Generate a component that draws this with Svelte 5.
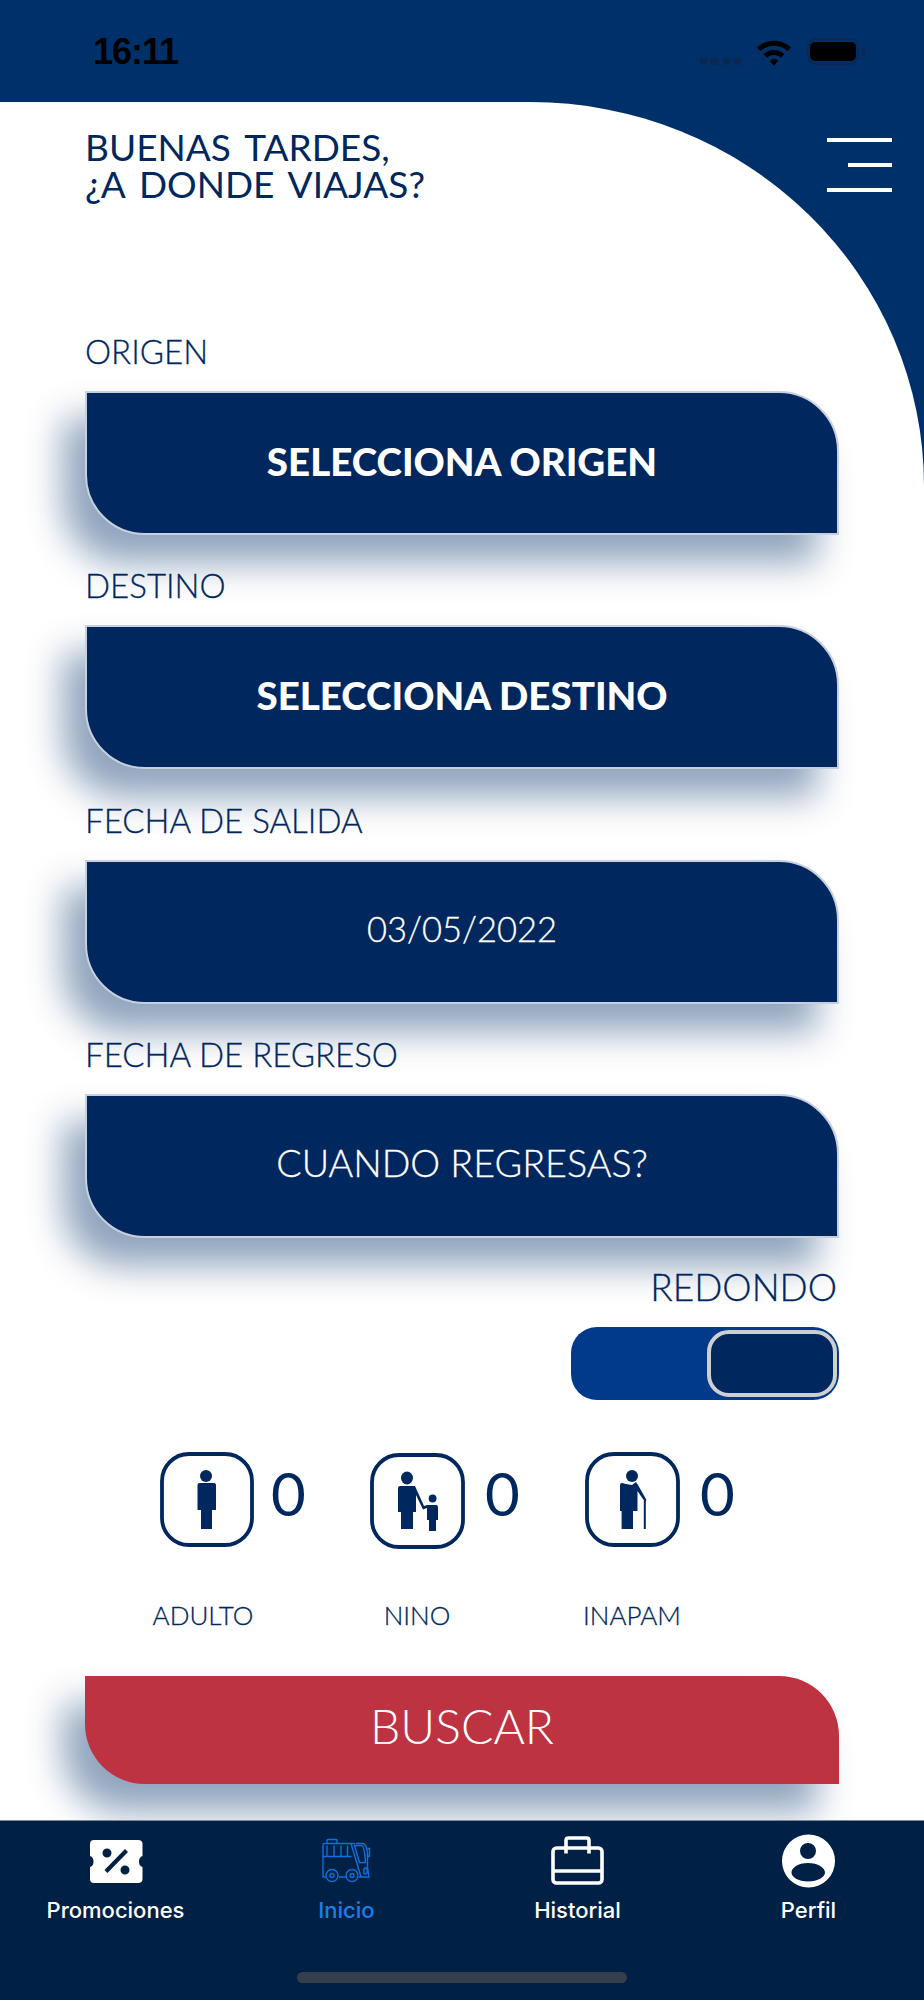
<script>
  const fields = [
    { label: 'ORIGEN', value: 'SELECCIONA ORIGEN', kind: 'strong' },
    { label: 'DESTINO', value: 'SELECCIONA DESTINO', kind: 'strong' },
    { label: 'FECHA DE SALIDA', value: '03/05/2022', kind: 'date' },
    { label: 'FECHA DE REGRESO', value: 'CUANDO REGRESAS?', kind: 'plain' }
  ];
</script>

<div class="page">
  <header class="status">
    <span class="time">16:11</span>
    <div class="status-icons">
      <div class="signal"><i></i><i></i><i></i><i></i></div>
      <svg class="wifi" viewBox="0 0 36 27" width="36" height="27" aria-hidden="true">
        <path d="M1 8.5C10.5 -0.5 25.5 -0.5 35 8.5L31.6 12.2C24 5 12 5 4.4 12.2Z" fill="#000"/>
        <path d="M7.6 15.2C13.5 9.6 22.5 9.6 28.4 15.2L25 18.8C21 15 15 15 11 18.8Z" fill="#000"/>
        <path d="M13.8 21.4C16.2 19.2 19.8 19.2 22.2 21.4L18 27Z" fill="#000"/>
      </svg>
      <div class="battery"><div class="battery-fill"></div></div>
      <div class="battery-nub"></div>
    </div>
  </header>

  <main class="panel">
    <div class="top-row">
      <h1>BUENAS TARDES,<br />¿A DONDE VIAJAS?</h1>
      <button class="menu" aria-label="Menu"><i></i><i class="short"></i><i></i></button>
    </div>

    <div class="fields">
      {#each fields as f}
        <div class="field">
          <div class="label">{f.label}</div>
          <button class="select {f.kind}">{f.value}</button>
        </div>
      {/each}
    </div>

    <div class="round-label">REDONDO</div>
    <div class="toggle-wrap">
      <div class="toggle"><div class="knob"></div></div>
    </div>

    <div class="passengers">
      <div class="passenger first">
        <svg class="pbox" viewBox="0 0 94 95" width="94" height="95" aria-hidden="true">
          <rect x="2" y="2" width="90" height="91" rx="27" fill="none" stroke="#00275e" stroke-width="3.8"/>
          <circle cx="46" cy="24" r="6" fill="#00275e"/>
          <path d="M39.5 31H54Q56 31 56 33V58H52V77H41V58H37.5V33Q37.5 31 39.5 31Z" fill="#00275e"/>
        </svg>
        <span class="count">0</span>
        <span class="plabel adult">ADULTO</span>
      </div>
      <div class="passenger">
        <svg class="pbox nino" viewBox="0 0 95 96" width="95" height="96" aria-hidden="true">
          <rect x="2" y="2" width="91" height="92" rx="27" fill="none" stroke="#00275e" stroke-width="3.8"/>
          <ellipse cx="37" cy="25" rx="6" ry="6.4" fill="#00275e"/>
          <path d="M30 33H45L54 53L57 52H66Q68 52 68 54V67H66V78H59V67H57V55L53 56.5L46 42V59H43V76H31V59H28V35Q28 33 30 33Z" fill="#00275e"/>
          <circle cx="62.6" cy="45.5" r="3.9" fill="#00275e"/>
        </svg>
        <span class="count">0</span>
        <span class="plabel">NINO</span>
      </div>
      <div class="passenger">
        <svg class="pbox" viewBox="0 0 95 95" width="95" height="95" aria-hidden="true">
          <rect x="2" y="2" width="91" height="91" rx="27" fill="none" stroke="#00275e" stroke-width="3.8"/>
          <circle cx="47" cy="24" r="6" fill="#00275e"/>
          <path d="M37 31L41 32L47 33L51 30L53 33L61.5 48L60 50L52.5 39V59H48V77H36.6V59H35V33Q35 31 37 31Z" fill="#00275e"/>
          <rect x="58.8" y="49" width="2" height="28" fill="#00275e"/>
        </svg>
        <span class="count">0</span>
        <span class="plabel">INAPAM</span>
      </div>
    </div>

    <button class="search">BUSCAR</button>
  </main>

  <nav class="tabbar">
    <div class="tabs">
      <div class="tab">
        <svg class="tab-icon soft" viewBox="0 0 70 60" width="70" height="60" aria-hidden="true">
          <path fill-rule="evenodd" fill="#fff" d="M13 10H57Q61.5 10 61.5 14V26Q58 27 58 31.5Q58 36 61.5 37V49Q61.5 53 57 53H13Q9 53 9 49V37Q12.500 36 12.500 31.500Q12.500 27 9 26V14Q9 10 13 10ZM26 18.500A4.500 4.500 0 1 0 26 27.500A4.500 4.500 0 1 0 26 18.500ZM44 35.500A4.500 4.500 0 1 0 44 44.500A4.500 4.500 0 1 0 44 35.500ZM44 19L23.500 40L26.500 43L47 22Z"/>
        </svg>
        <span>Promociones</span>
      </div>
      <div class="tab active">
        <svg class="tab-icon bus" viewBox="0 0 70 60" width="70" height="60" aria-hidden="true" fill="none" stroke="#0f6fdc" stroke-width="1.4">
          <path d="M17 13V10.500Q17 9.500 18 9.500H26Q27 9.500 27 10.500V13"/>
          <path d="M46 13.500H53Q56.500 14.500 57.500 23V37.500L59 47H48.500M36 47H29M15.500 47H13V15Q13 13.500 14.500 13.500H45"/>
          <path d="M13 26.500H41.500M17 15.500V26.500M24 15.500V26.500M31 15.500V26.500M37.500 15.500V26.500"/>
          <path d="M41 13.500L51 47M44.500 15.500H52Q54.500 17 55.500 32.500H49.500Z"/>
          <path d="M57.500 18.500H59.500V26L57.500 27"/>
          <ellipse cx="55.500" cy="41" rx="1.800" ry="3"/>
          <circle cx="22" cy="45.500" r="6"/><circle cx="22" cy="45.500" r="2"/>
          <circle cx="42" cy="45.500" r="6"/><circle cx="42" cy="45.500" r="2"/>
        </svg>
        <span>Inicio</span>
      </div>
      <div class="tab">
        <svg class="tab-icon soft case" viewBox="0 0 70 60" width="70" height="60" aria-hidden="true" fill="none" stroke="#fff" stroke-width="3.6">
          <rect x="13" y="18" width="49" height="35" rx="3.500"/>
          <path d="M26 23.500V10.500Q26 8 28.500 8H46.500Q49 8 49 10.500V23.500"/>
          <path d="M13 41H62"/>
        </svg>
        <span>Historial</span>
      </div>
      <div class="tab">
        <svg class="tab-icon soft user" viewBox="0 0 70 60" width="70" height="60" aria-hidden="true">
          <path fill-rule="evenodd" fill="#fff" d="M33.500 4.500A26.500 26.500 0 1 0 33.500 57.500A26.500 26.500 0 1 0 33.500 4.500ZM33 13A8 8 0 1 0 33 29A8 8 0 1 0 33 13ZM33 33C23 33 16.500 38 16.500 42.500C16.500 47 23 51.500 33 51.500C43 51.500 50 47 50 42.500C50 38 43 33 33 33Z"/>
        </svg>
        <span>Perfil</span>
      </div>
    </div>
    <div class="home"></div>
  </nav>
</div>

<style>
  :global(body) {
    margin: 0;
    background: #fff;
  }
  .page {
    width: 924px;
    height: 2000px;
    display: flex;
    flex-direction: column;
    background: #00306a;
    font-family: Lato, "Open Sans", sans-serif;
    color: #00275e;
    overflow: hidden;
  }
  button {
    font-family: inherit;
    border: none;
    padding: 0;
    margin: 0;
    cursor: pointer;
  }

  .status {
    height: 102px;
    flex: none;
    display: flex;
    justify-content: space-between;
    padding: 38px 59px 0 93px;
    box-sizing: border-box;
  }
  .time {
    font-family: "Liberation Sans", sans-serif;
    font-size: 36px;
    font-weight: 700;
    line-height: 28px;
    color: #000;
    letter-spacing: -1px;
  }
  .status-icons {
    display: flex;
    align-items: flex-start;
  }
  .signal {
    display: flex;
    gap: 4.5px;
    margin: 20px 15px 0 0;
  }
  .signal i {
    width: 7px;
    height: 7px;
    border-radius: 2px;
    background: #0a2850;
  }
  .wifi {
    display: block;
    margin-top: 1px;
  }
  .battery {
    width: 52px;
    height: 27px;
    margin-left: 15px;
    box-sizing: border-box;
    border: 2px solid #0a2850;
    border-radius: 9px;
    padding: 2px 1px;
  }
  .battery-fill {
    height: 100%;
    background: #000;
    border-radius: 5px;
  }
  .battery-nub {
    width: 3px;
    height: 8px;
    margin: 10px 0 0 3px;
    background: #0a2850;
    border-radius: 0 3px 3px 0;
  }

  .panel {
    flex: 1;
    background: #fff;
    border-top-right-radius: 394px 384px;
    padding: 26px 0 0 85px;
    box-sizing: border-box;
    min-height: 0;
  }
  .top-row {
    display: flex;
    justify-content: space-between;
    height: 74px;
    margin-bottom: 110px;
    padding-right: 32px;
  }
  h1 {
    margin: 0;
    font-size: 37px;
    font-weight: 400;
    line-height: 37px;
    word-spacing: 5px;
    color: #00275e;
  }
  .menu {
    display: flex;
    flex-direction: column;
    align-items: flex-end;
    gap: 21px;
    width: 65px;
    margin-top: 10px;
    background: none;
    height: 55px;
  }
  .menu i {
    display: block;
    width: 65px;
    height: 4px;
    background: #fff;
  }
  .menu i.short {
    width: 44px;
  }

  .fields {
    display: flex;
    flex-direction: column;
    gap: 11.3px;
    width: 754px;
  }
  .label {
    height: 79px;
    line-height: 79px;
    font-size: 33px;
    font-weight: 300;
    -webkit-text-stroke: 0.3px #00275e;
    color: #00275e;
  }
  .select {
    display: block;
    width: 754px;
    height: 144px;
    box-sizing: border-box;
    padding-bottom: 7px;
    background: #00275e;
    border: 2px solid #c6d0de;
    border-radius: 0 60px 0 60px;
    box-shadow: -22px 28px 36px rgba(0, 48, 105, 0.44);
    color: #fff;
    font-size: 37.7px;
    font-weight: 300;
    -webkit-text-stroke: 0.3px #fff;
  }
  .select.strong {
    padding-bottom: 4px;
    font-size: 38.5px;
    font-weight: 900;
    -webkit-text-stroke: 0;
  }
  .select.date {
    padding-bottom: 6px;
    font-size: 34.5px;
  }

  .round-label {
    width: 752px;
    margin-top: 29px;
    height: 40px;
    line-height: 40px;
    font-size: 37px;
    font-weight: 300;
    -webkit-text-stroke: 0.3px #00275e;
    text-align: right;
  }
  .toggle-wrap {
    width: 754px;
    margin-top: 20px;
    display: flex;
    justify-content: flex-end;
  }
  .toggle {
    width: 268px;
    height: 73px;
    box-sizing: border-box;
    padding: 3px 2px 3px 0;
    display: flex;
    justify-content: flex-end;
    background: #013a8b;
    border-radius: 26px;
  }
  .knob {
    width: 130px;
    height: 67px;
    box-sizing: border-box;
    background: #00275e;
    border: 4px solid #cfcfcf;
    border-radius: 22px;
  }

  .passengers {
    display: grid;
    grid-template-columns: 210px 215px auto;
    margin: 52px 0 0 75px;
    height: 183px;
  }
  .passenger {
    display: grid;
    grid-template-columns: 94px auto;
    grid-template-rows: 95px 40px;
    column-gap: 21px;
    row-gap: 48px;
    justify-content: start;
  }
  .passenger.first {
    column-gap: 17px;
  }
  .pbox {
    display: block;
  }
  .pbox.nino {
    margin-top: 1px;
  }
  .count {
    font-size: 60px;
    line-height: 60px;
    margin-top: 11px;
    color: #00275e;
  }
  .plabel {
    grid-column: 1;
    justify-self: center;
    white-space: nowrap;
    line-height: 40px;
    font-size: 26px;
    font-weight: 300;
    -webkit-text-stroke: 0.3px #00275e;
    color: #00275e;
  }
  .plabel.adult {
    margin-right: 8px;
  }

  .search {
    display: block;
    width: 754px;
    height: 108px;
    margin: 41px 0 0;
    padding-bottom: 9px;
    background: #bd3341;
    border-radius: 0 60px 0 60px;
    box-shadow: -22px 28px 36px rgba(0, 48, 105, 0.44);
    color: #fff;
    font-size: 48px;
    font-weight: 300;
  }

  .tabbar {
    flex: none;
    height: 180px;
    box-sizing: border-box;
    background: #002145;
    border-top: 1px solid #7b8896;
    position: relative;
  }
  .tabs {
    display: grid;
    grid-template-columns: repeat(4, 1fr);
    padding-top: 9px;
  }
  .tab {
    display: flex;
    flex-direction: column;
    align-items: center;
    font-family: Inter, sans-serif;
    font-size: 22px;
    font-weight: 500;
    line-height: 28px;
    color: #fff;
  }
  .tab span {
    margin-top: 6px;
  }
  .tab.active {
    color: #1a7fe8;
  }
  .tab-icon {
    display: block;
  }
  .tab-icon.bus {
    margin-left: -3px;
  }
  .tab-icon.case {
    margin-left: -5px;
  }
  .tab-icon.user {
    margin-left: 3px;
  }
  .soft {
    filter: blur(0.5px);
  }
  .home {
    width: 330px;
    height: 11px;
    margin: 48px auto 0;
    border-radius: 6px;
    background: #343f4e;
  }
</style>
